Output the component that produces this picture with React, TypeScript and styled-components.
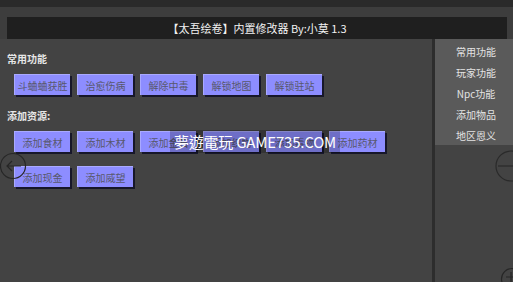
import React from 'react';
import styled, { createGlobalStyle } from 'styled-components';

const GlobalStyle = createGlobalStyle`
  html, body {
    margin: 0;
    padding: 0;
    background: #434343;
  }
  body {
    font-family: "Noto Sans CJK SC", "Noto Sans", sans-serif;
  }
`;

const Screen = styled.div`
  position: relative;
  width: 513px;
  height: 282px;
  overflow: hidden;
  background: #434343;
  display: flex;
  flex-direction: column;
`;

const TopStrip = styled.div`
  height: 7px;
  flex-shrink: 0;
  background: #2a2a2a;
`;

const Body = styled.div`
  flex: 1;
  display: flex;
  flex-direction: column;
  padding-top: 10px;
  background: #3d3d3d;
`;

const TitleBar = styled.div`
  height: 22px;
  flex-shrink: 0;
  margin: 0 6px 0 7px;
  background: #1f1f1f;
  color: #f2f2f2;
  font-size: 11px;
  display: flex;
  align-items: center;
  justify-content: center;
`;

const Main = styled.div`
  flex: 1;
  display: flex;
  background: #434343;
`;

const Content = styled.div`
  width: 432px;
  box-sizing: border-box;
  padding: 13px 0 0 7px;
`;

const Divider = styled.div`
  width: 3px;
  background: #2d2d2d;
`;

const Sidebar = styled.div`
  flex: 1;
`;

const Menu = styled.div`
  height: 106px;
  box-sizing: border-box;
  padding-top: 2px;
  background: #5a5a5a;
`;

const MenuItem = styled.div`
  height: 21px;
  line-height: 21px;
  text-align: center;
  color: #e4e4e4;
  font-size: 10px;
  padding-left: 4px;
`;

const SectionLabel = styled.div`
  height: 14px;
  line-height: 14px;
  font-size: 10px;
  font-weight: bold;
  color: #e6e6e6;
`;

const ButtonGrid = styled.div`
  display: flex;
  flex-wrap: wrap;
  gap: 14px 7px;
  padding-left: 7px;
  margin: 8px 0 14px;
`;

const ModButton = styled.div`
  width: 56px;
  height: 21px;
  box-sizing: border-box;
  background: #8d8dff;
  border-top: 1px solid #a9a9ff;
  border-left: 1px solid #a9a9ff;
  box-shadow: 2px 2px 0 #17172a;
  color: #58586c;
  font-size: 10px;
  display: flex;
  align-items: center;
  justify-content: center;
  white-space: nowrap;
`;

const Watermark = styled.div`
  position: absolute;
  left: 170px;
  top: 130px;
  width: 170px;
  height: 23px;
  background: rgba(0, 0, 0, 0.22);
  color: #ffffff;
  font-family: "Noto Sans CJK TC", "Noto Sans", sans-serif;
  font-size: 15px;
  line-height: 23px;
  text-align: center;
  white-space: nowrap;
  letter-spacing: -0.2px;
`;

const RoundIcon = styled.svg<{ $left: number; $top: number }>`
  position: absolute;
  left: ${(p) => p.$left}px;
  top: ${(p) => p.$top}px;
  overflow: visible;
`;

const common = ['斗蛐蛐获胜', '治愈伤病', '解除中毒', '解锁地图', '解锁驻站'];
const resources = ['添加食材', '添加木材', '添加金石', '添加织物', '添加毒物', '添加药材', '添加现金', '添加威望'];
const menu = ['常用功能', '玩家功能', 'Npc功能', '添加物品', '地区恩义'];

export default function App() {
  return (
    <>
      <GlobalStyle />
      <Screen>
        <TopStrip />
        <Body>
          <TitleBar>【太吾绘卷】内置修改器 By:小莫 1.3</TitleBar>
          <Main>
            <Content>
              <SectionLabel>常用功能</SectionLabel>
              <ButtonGrid>
                {common.map((t) => (
                  <ModButton key={t}>{t}</ModButton>
                ))}
              </ButtonGrid>
              <SectionLabel>添加资源:</SectionLabel>
              <ButtonGrid>
                {resources.map((t) => (
                  <ModButton key={t}>{t}</ModButton>
                ))}
              </ButtonGrid>
            </Content>
            <Divider />
            <Sidebar>
              <Menu>
                {menu.map((m) => (
                  <MenuItem key={m}>{m}</MenuItem>
                ))}
              </Menu>
            </Sidebar>
          </Main>
        </Body>

        <Watermark>夢遊電玩 GAME735.COM</Watermark>

        <RoundIcon $left={0} $top={153} width="27" height="27" viewBox="0 0 27 27">
          <circle cx="13" cy="13" r="12.5" fill="none" stroke="#262626" strokeWidth="1.2" />
          <path d="M12 8 L7 13 L12 18 M7 13 H21" fill="none" stroke="#262626" strokeWidth="1.2" />
        </RoundIcon>
        <RoundIcon $left={495} $top={150} width="32" height="32" viewBox="0 0 32 32">
          <circle cx="16" cy="16" r="15" fill="none" stroke="#2a2a2a" strokeWidth="1.2" />
          <path d="M3 16 H18" fill="none" stroke="#2a2a2a" strokeWidth="1.2" />
        </RoundIcon>
        <RoundIcon $left={501} $top={268} width="24" height="24" viewBox="0 0 24 24">
          <circle cx="11" cy="11" r="10.5" fill="none" stroke="#262626" strokeWidth="1.2" />
          <path d="M10 4 V14 M5 9 H15" fill="none" stroke="#262626" strokeWidth="1.2" />
        </RoundIcon>
      </Screen>
    </>
  );
}
